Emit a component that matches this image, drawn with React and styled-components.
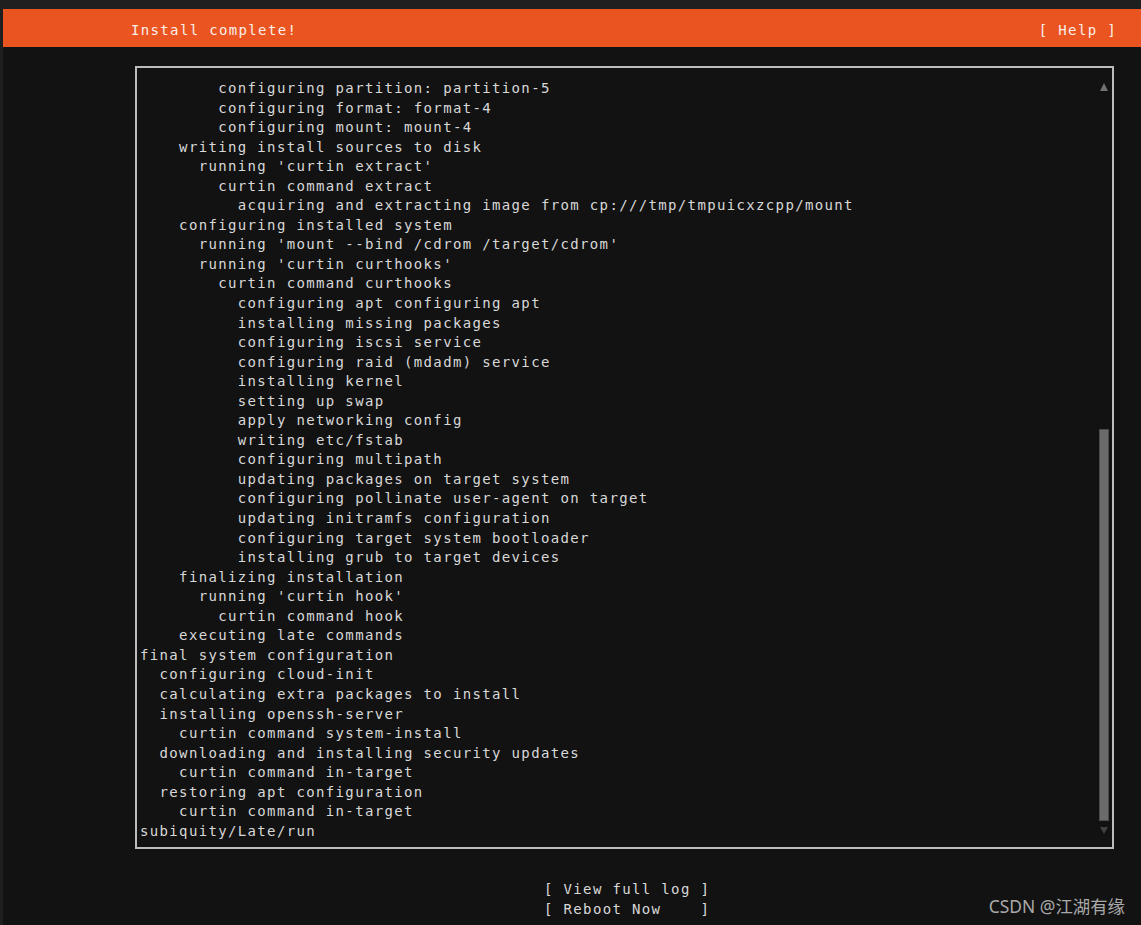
import React from 'react'
import styled, { createGlobalStyle } from 'styled-components'

const CHAR = 9.78
const LINE = 19.55

const Global = createGlobalStyle`
  html, body {
    margin: 0;
    padding: 0;
    background: #111111;
  }
`

const Screen = styled.div`
  position: relative;
  box-sizing: border-box;
  width: 1141px;
  height: 925px;
  background: #121212;
  border-top: 9px solid #1f1f1f;
  border-left: 3px solid #1f1f1f;
  font-family: "DejaVu Sans Mono", "Liberation Mono", monospace;
  font-size: 14px;
  letter-spacing: ${CHAR - 8.43}px;
  color: #d8d8d8;
  overflow: hidden;
`

const Header = styled.div`
  box-sizing: border-box;
  display: flex;
  justify-content: space-between;
  align-items: center;
  height: 38px;
  padding: 3px 24px 0 128px;
  background: #e95420;
  color: #fbeee8;
  white-space: pre;
`

const Main = styled.div`
  margin: 19px 0 0 132px;
  width: 979px;
`

const LogBox = styled.div`
  box-sizing: border-box;
  height: 783px;
  border: 2px solid #bcbcbc;
  display: flex;
`

const LogText = styled.div`
  flex: 1;
  padding: 11px 0 0 3px;
  line-height: ${LINE}px;
  white-space: pre;
`

const ScrollCol = styled.div`
  width: 10px;
  margin-right: 3px;
  padding: 15px 0 13px;
  display: flex;
  flex-direction: column;
  align-items: center;
`

const Arrow = styled.div`
  width: 0;
  height: 0;
  border-left: 4px solid transparent;
  border-right: 4px solid transparent;
  ${p => p.down
    ? `border-top: 7px solid #404040; margin-top: 6px;`
    : `border-bottom: 8px solid #707070;`}
`

const Track = styled.div`
  flex: 1;
  width: 100%;
  display: flex;
  flex-direction: column;
  justify-content: flex-end;
`

const Thumb = styled.div`
  box-sizing: border-box;
  height: 392px;
  background: #6b6b6b;
  border: 1px solid #4a4a4a;
`

const Buttons = styled.div`
  margin: 31px 0 0 541px;
  line-height: ${LINE}px;
  white-space: pre;
`

const Watermark = styled.div`
  position: absolute;
  right: 16px;
  bottom: 7px;
  font-family: "Noto Sans", "Noto Sans CJK SC", sans-serif;
  font-size: 17.4px;
  letter-spacing: 0;
  color: #a9a9a9;
`

const log = [
  '        configuring partition: partition-5',
  '        configuring format: format-4',
  '        configuring mount: mount-4',
  '    writing install sources to disk',
  "      running 'curtin extract'",
  '        curtin command extract',
  '          acquiring and extracting image from cp:///tmp/tmpuicxzcpp/mount',
  '    configuring installed system',
  "      running 'mount --bind /cdrom /target/cdrom'",
  "      running 'curtin curthooks'",
  '        curtin command curthooks',
  '          configuring apt configuring apt',
  '          installing missing packages',
  '          configuring iscsi service',
  '          configuring raid (mdadm) service',
  '          installing kernel',
  '          setting up swap',
  '          apply networking config',
  '          writing etc/fstab',
  '          configuring multipath',
  '          updating packages on target system',
  '          configuring pollinate user-agent on target',
  '          updating initramfs configuration',
  '          configuring target system bootloader',
  '          installing grub to target devices',
  '    finalizing installation',
  "      running 'curtin hook'",
  '        curtin command hook',
  '    executing late commands',
  'final system configuration',
  '  configuring cloud-init',
  '  calculating extra packages to install',
  '  installing openssh-server',
  '    curtin command system-install',
  '  downloading and installing security updates',
  '    curtin command in-target',
  '  restoring apt configuration',
  '    curtin command in-target',
  'subiquity/Late/run',
]

export default function App() {
  return (
    <>
      <Global />
      <Screen>
        <Header>
          <span>Install complete!</span>
          <span>[ Help ]</span>
        </Header>
        <Main>
          <LogBox>
            <LogText>
              {log.map((l, i) => (
                <div key={i}>{l}</div>
              ))}
            </LogText>
            <ScrollCol>
              <Arrow />
              <Track>
                <Thumb />
              </Track>
              <Arrow down />
            </ScrollCol>
          </LogBox>
        </Main>
        <Buttons>
          <div>[ View full log ]</div>
          <div>[ Reboot Now    ]</div>
        </Buttons>
        <Watermark>CSDN @江湖有缘</Watermark>
      </Screen>
    </>
  )
}
